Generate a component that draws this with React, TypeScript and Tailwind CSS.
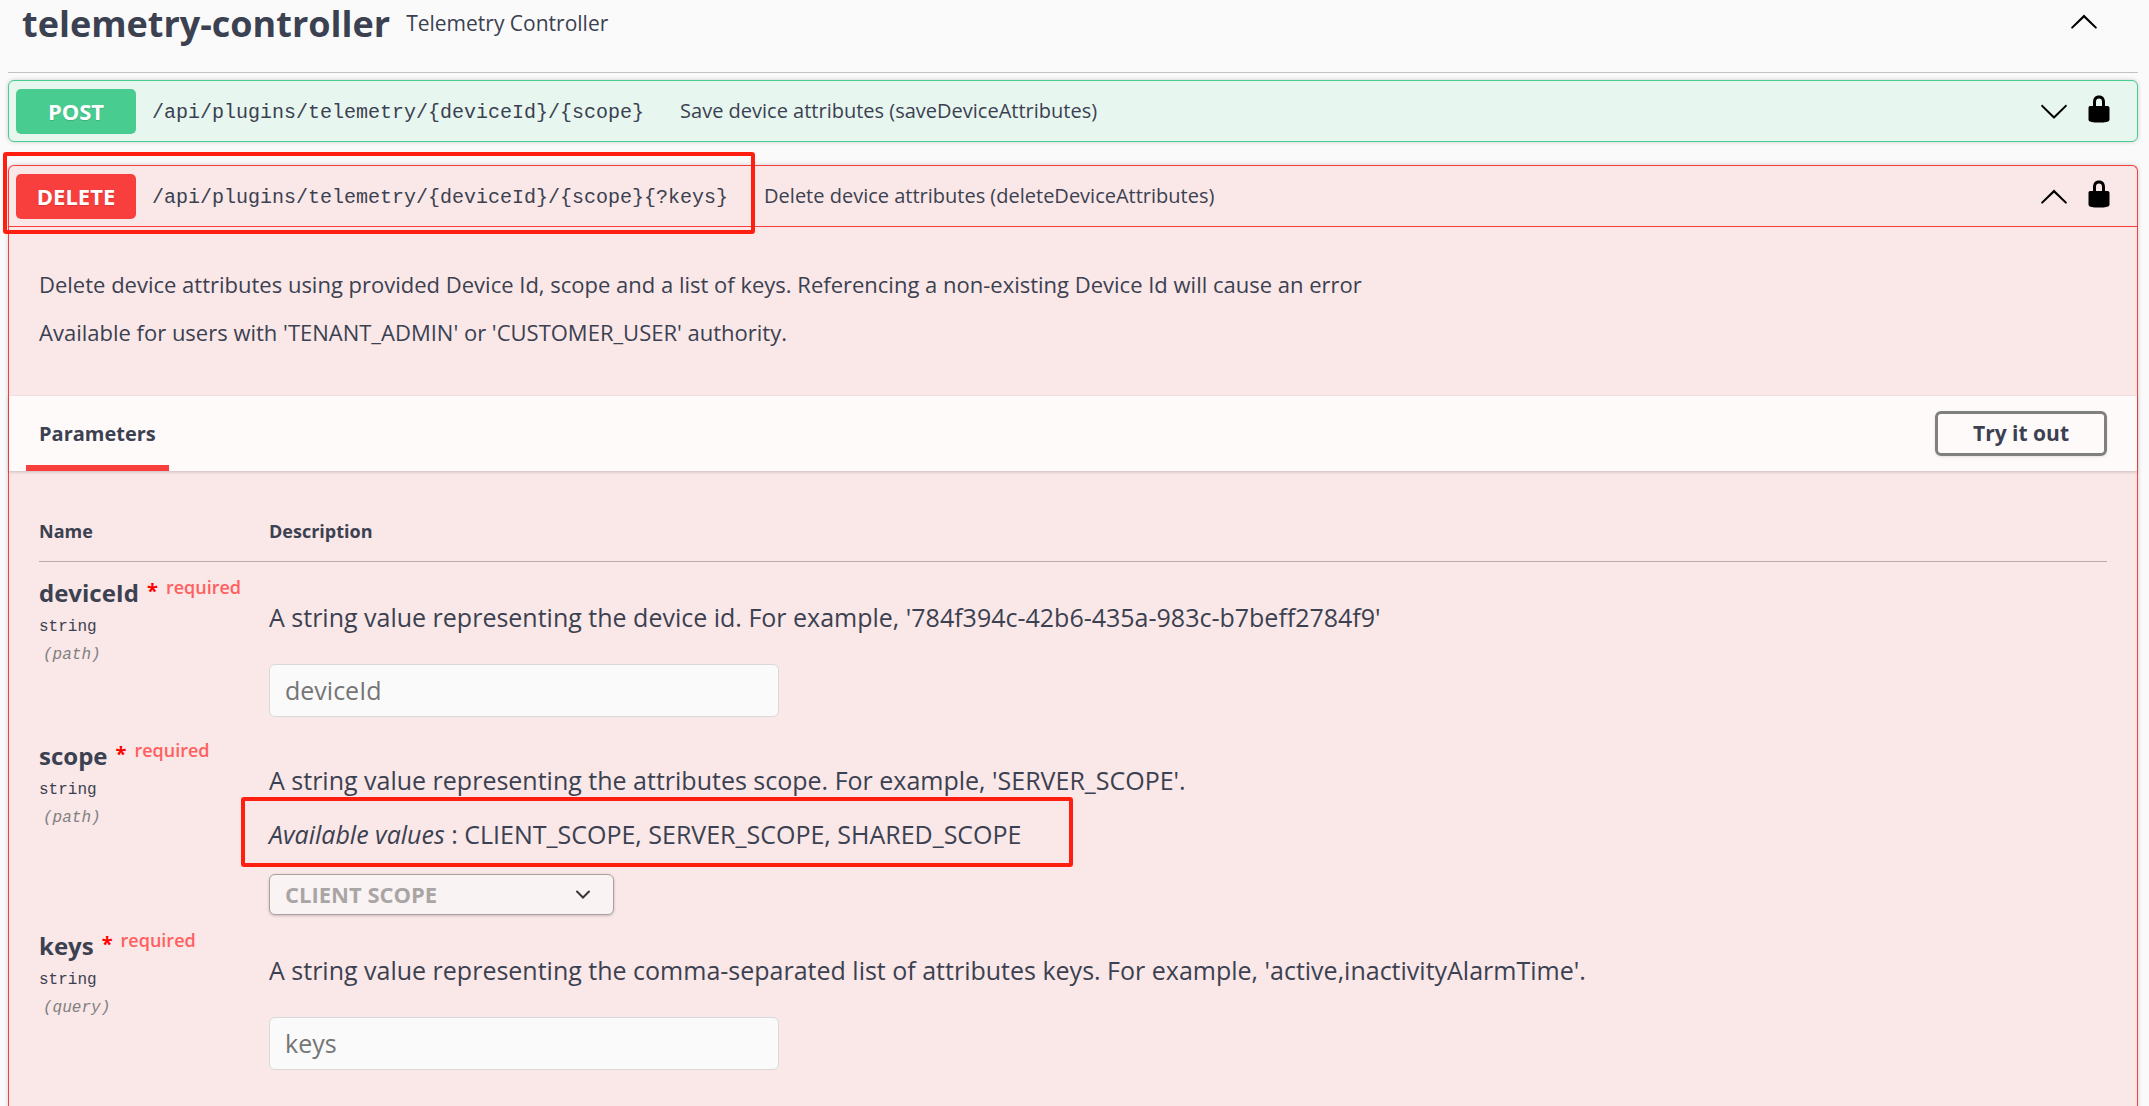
import type { ReactNode } from "react";

const ARROW_DOWN =
  "M17.418 6.109c.272-.268.709-.268.979 0s.271.701 0 .969l-7.908 7.83c-.27.268-.707.268-.979 0l-7.908-7.83c-.27-.268-.27-.701 0-.969.271-.268.709-.268.979 0L10 13.25l7.418-7.141z";
const ARROW_UP =
  "M17.418 14.908c.272.268.709.268.979 0s.271-.701 0-.969l-7.908-7.83c-.27-.268-.707-.268-.979 0l-7.908 7.83c-.27.268-.27.701 0 .969.271.268.709.268.979 0L10 7.767l7.418 7.141z";
const LOCK =
  "M15.8 8H14V5.6C14 2.703 12.665 1 10 1 7.334 1 6 2.703 6 5.6V8H4c-.553 0-1 .646-1 1.199V17c0 .549.428 1.139.951 1.307l1.197.387C5.672 18.861 6.55 19 7.1 19h5.8c.549 0 1.428-.139 1.951-.307l1.196-.387c.524-.167.953-.757.953-1.306V9.199C17 8.646 16.352 8 15.8 8zM12 8H8V5.199C8 3.754 8.797 3 10 3c1.203 0 2 .754 2 2.199V8z";

function Icon({ d }: { d: string }) {
  return (
    <svg viewBox="0 0 20 20" className="size-[30px] fill-black" aria-hidden="true">
      <path d={d} />
    </svg>
  );
}

function Highlight({ className }: { className: string }) {
  return (
    <div
      aria-hidden="true"
      className={`pointer-events-none absolute rounded-[3px] border-4 border-[#ff1f10] ${className}`}
    />
  );
}

type SummaryProps = {
  method: string;
  badge: string;
  path: string;
  summary: string;
  open?: boolean;
};

function OperationSummary({ method, badge, path, summary, open }: SummaryProps) {
  return (
    <div className="flex h-[60px] items-center pl-[7px] pr-[23px]">
      <span
        className={`flex h-[45px] w-[120px] shrink-0 items-center justify-center rounded-[5px] text-[22px] font-bold text-white [text-shadow:0_1px_1px_rgba(0,0,0,0.15)] ${badge}`}
      >
        {method}
      </span>
      <code className="ml-4 pt-1 font-['Liberation_Mono',monospace] text-xl whitespace-nowrap">{path}</code>
      <span className="ml-9 grow text-xl">{summary}</span>
      <button type="button" aria-label={open ? "Collapse operation" : "Expand operation"}>
        <Icon d={open ? ARROW_UP : ARROW_DOWN} />
      </button>
      <button type="button" aria-label="Authorization" className="ml-[15px] pb-1">
        <Icon d={LOCK} />
      </button>
    </div>
  );
}

type ParameterProps = { name: string; location: string; children: ReactNode };

function ParameterRow({ name, location, children }: ParameterProps) {
  return (
    <tr className="align-top">
      <td className="w-[230px] pt-[15px]">
        <label htmlFor={name} className="block text-2xl leading-8 font-bold whitespace-nowrap">
          {name}
          <span className="relative -top-1 pl-2 text-xl text-[#ff0000]">*</span>
          <span className="relative -top-2 pl-2 text-lg font-semibold text-[#ff6060]">required</span>
        </label>
        <div className="mt-1 font-['Liberation_Mono',monospace] text-base leading-7">string</div>
        <div className="pl-1 font-['Liberation_Mono',monospace] text-base leading-7 text-[#808080] italic">
          ({location})
        </div>
      </td>
      <td className="pt-[39px] text-[25px] leading-8">{children}</td>
    </tr>
  );
}

function TextParameter({ name }: { name: string }) {
  return (
    <input
      id={name}
      type="text"
      placeholder={name}
      disabled
      className="mt-[31px] mb-2 block h-[53px] w-[510px] max-w-full rounded-md border border-[#d9d9d9] bg-[#fafafa] px-[15px] text-[25px] placeholder:text-[#757575]"
    />
  );
}

export default function App() {
  return (
    <div className="flex min-h-screen flex-col overflow-hidden bg-[#fafafa] pr-[11px] pl-2 font-['Open_Sans',sans-serif] text-[#3b4151]">
      <header className="flex h-[73px] border-b border-[#c0c2c6] pr-[39px] pl-[14px]">
        <div className="flex h-12 grow items-center">
          <h1 className="text-[36px] font-bold">telemetry-controller</h1>
          <span className="ml-4 text-[21px]">Telemetry Controller</span>
        </div>
        <button type="button" aria-label="Collapse section" className="mt-[6px] self-start">
          <Icon d={ARROW_UP} />
        </button>
      </header>

      <section className="mt-[7px] rounded-md border border-[#49cc90] bg-[#e8f6f0] shadow-[0_0_4px_rgba(0,0,0,0.19)]">
        <OperationSummary
          method="POST"
          badge="bg-[#49cc90]"
          path="/api/plugins/telemetry/{deviceId}/{scope}"
          summary="Save device attributes (saveDeviceAttributes)"
        />
      </section>

      <section className="relative mt-[23px] grow rounded-t-md border border-b-0 border-[#f93e3e] bg-[#fae7e7] shadow-[0_0_4px_rgba(0,0,0,0.19)]">
        <Highlight className="-top-[14px] -left-[6px] h-[82px] w-[752px]" />
        <OperationSummary
          method="DELETE"
          badge="bg-[#f93e3e]"
          path="/api/plugins/telemetry/{deviceId}/{scope}{?keys}"
          summary="Delete device attributes (deleteDeviceAttributes)"
          open
        />

        <div className="flex flex-col gap-5 border-t border-[#f93e3e] px-[30px] pt-[43px] pb-[50px] text-[22px] leading-7">
          <p>
            Delete device attributes using provided Device Id, scope and a list of keys. Referencing a non-existing
            Device Id will cause an error
          </p>
          <p>Available for users with 'TENANT_ADMIN' or 'CUSTOMER_USER' authority.</p>
        </div>

        <div className="flex h-[75px] items-center justify-between bg-[#fefafa] pr-[30px] pl-[17px] shadow-[0_1px_3px_rgba(0,0,0,0.2)]">
          <h2 className="flex h-full items-center border-b-[6px] border-[#f93e3e] px-[13px] pt-[6px] text-xl font-bold">
            Parameters
          </h2>
          <button
            type="button"
            className="h-[45px] w-[172px] rounded-md border-[3px] border-[#808080] text-[21px] font-bold shadow-[0_1px_3px_rgba(0,0,0,0.1)]"
          >
            Try it out
          </button>
        </div>

        <div className="px-[30px] pb-8">
          <table className="w-full border-collapse">
            <thead>
              <tr className="h-[90px] border-b border-[#bba9ae] text-left align-bottom text-lg leading-7">
                <th className="pb-4 font-bold">Name</th>
                <th className="pb-4 font-bold">Description</th>
              </tr>
            </thead>
            <tbody>
              <ParameterRow name="deviceId" location="path">
                <p>A string value representing the device id. For example, '784f394c-42b6-435a-983c-b7beff2784f9'</p>
                <TextParameter name="deviceId" />
              </ParameterRow>
              <ParameterRow name="scope" location="path">
                <p>A string value representing the attributes scope. For example, 'SERVER_SCOPE'.</p>
                <p className="relative mt-[22px]">
                  <Highlight className="-top-[21px] -left-[28px] h-[70px] w-[832px]" />
                  <i>Available values</i> : CLIENT_SCOPE, SERVER_SCOPE, SHARED_SCOPE
                </p>
                <div className="relative mt-6 w-[345px]">
                  <select
                    id="scope"
                    disabled
                    className="block h-[41px] w-full appearance-none rounded-md border border-[#a8a2a3] bg-[#faf3f3] px-[15px] text-[22px] font-bold text-[#aaa5a5] opacity-100 shadow-[0_1px_3px_rgba(0,0,0,0.2)]"
                  >
                    <option>CLIENT SCOPE</option>
                  </select>
                  <svg
                    viewBox="0 0 16 10"
                    aria-hidden="true"
                    className="pointer-events-none absolute top-4 right-[23px] h-[10px] w-4 fill-none stroke-[#3a3537] stroke-2"
                  >
                    <path d="M2 1.5l6 6 6-6" strokeLinecap="round" />
                  </svg>
                </div>
              </ParameterRow>
              <ParameterRow name="keys" location="query">
                <p>
                  A string value representing the comma-separated list of attributes keys. For example,
                  'active,inactivityAlarmTime'.
                </p>
                <TextParameter name="keys" />
              </ParameterRow>
            </tbody>
          </table>
        </div>
      </section>
    </div>
  );
}
